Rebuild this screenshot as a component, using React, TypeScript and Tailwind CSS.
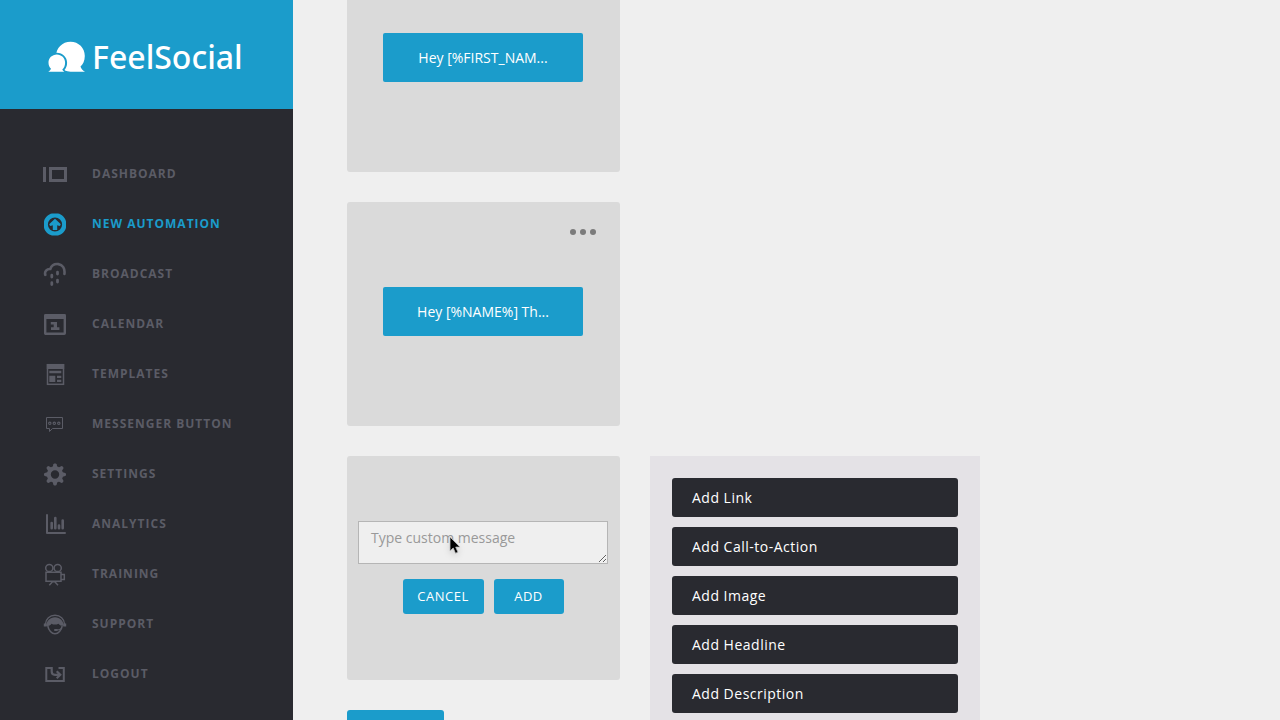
import type { ReactNode } from 'react'
import { clsx } from 'clsx'

type NavItem = { label: string; icon: ReactNode; active?: boolean }

// Sidebar icons, all on a 24px grid
const icons = {
  dashboard: (
    <>
      <rect x="0" y="5" width="3" height="15" fill="currentColor" />
      <rect x="7.500" y="6.500" width="15" height="12" strokeWidth="3" />
    </>
  ),
  automation: (
    <>
      <path
        d="M9 1.600h6c3.500.4 7.400 4.200 8 7.900v6c-.6 3.700-4.500 7.500-8 7.900H9c-3.500-.4-7.400-4.200-8-7.900v-6C1.600 5.800 5.500 2 9 1.600zM12 5.400a7.100 7.100 0 1 0 0 14.200 7.100 7.100 0 0 0 0-14.200z"
        fill="currentColor"
        fillRule="evenodd"
      />
      <path d="M12 6.800l5.600 5.300c.3 1.400-.8 2.100-1.900 1.700l-1.500-.6V18H9.800v-4.800l-1.500.6c-1.100.4-2.200-.3-1.900-1.700z" fill="currentColor" />
    </>
  ),
  broadcast: (
    <>
      <path d="M2.300 12.800C1.300 9.500 3.700 6.800 7.300 7 8.500 3.500 11.800 1.700 15.300 2.100c4.300.5 6.900 4.200 6.100 9.900" strokeWidth="2.600" strokeLinecap="round" />
      <path d="M8.800 13.200v1.800M14.500 10.200V12M8.800 20.700v1.800M14.500 18.200V20" strokeWidth="2.800" strokeLinecap="round" />
    </>
  ),
  calendar: (
    <>
      <rect x="2.200" y="3.200" width="19.600" height="18.600" rx="0.500" strokeWidth="2.400" />
      <path d="M1.500 2.200h21V7h-21z" fill="currentColor" />
      <path d="M7.800 9.900h6.200v5.300h2.400v2.900H8v-2.900h2.700v-2.600H7.800z" fill="currentColor" />
    </>
  ),
  templates: (
    <>
      <rect x="4.500" y="2.700" width="16" height="19.600" strokeWidth="1.500" />
      <path d="M3.800 2h17.400v4.900H3.800zM6.300 8.700h12v2.600h-12zM6.300 13.700h6V20h-6zM14 13.700h4.300V16H14zM14 17.700h4.300V20H14z" fill="currentColor" />
    </>
  ),
  messenger: (
    <>
      <path d="M3.500 5.500h16v11h-10l-3 3v-3h-3z" strokeWidth="1" />
      <circle cx="6.800" cy="11.300" r="1.200" strokeWidth="1.100" />
      <circle cx="11.300" cy="11.300" r="1.200" strokeWidth="1.100" />
      <circle cx="15.800" cy="11.300" r="1.200" strokeWidth="1.100" />
    </>
  ),
  settings: (
    <>
      <circle cx="12" cy="12.500" r="6.200" strokeWidth="4" />
      {[0, 45, 90, 135, 180, 225, 270, 315].map(deg => (
        <path key={deg} d="M9.500 5.500l.9-3.200q.3-.8 1-.8h1.200q.7 0 1 .8l.9 3.200z" fill="currentColor" transform={`rotate(${deg} 12 12.500)`} />
      ))}
    </>
  ),
  analytics: (
    <>
      <path d="M4 3v18h18" strokeWidth="2" strokeLinecap="round" strokeLinejoin="round" />
      <path d="M8.700 11v5.300M12.300 6v10.300M16 13.500v2.800M19.700 8.500v7.800" strokeWidth="2.600" strokeLinecap="round" />
    </>
  ),
  training: (
    <>
      <circle cx="6.300" cy="6" r="3.600" strokeWidth="1.500" />
      <circle cx="14.700" cy="6" r="3.600" strokeWidth="1.500" />
      <path d="M3 10.300h15v9H3zM18 12.500h3.300v5H18M6.300 23.300l3.200-3.500h2.300l3.200 3.500" strokeWidth="1.500" />
    </>
  ),
  support: (
    <>
      <path d="M2.300 12.500C2.700 6.800 6.800 3.300 12 3.300s9.300 3.500 9.700 9.200" strokeWidth="1.400" />
      <path d="M.8 11.500h3v3h-3zM20.200 11.500h3v3h-3z" fill="currentColor" />
      <path d="M3.300 14C3.300 9 7 5.300 12 5.300S20.700 9 20.700 14c-2.400 0-4-.7-5.200-2.200-2.800 1.300-5.300.9-7-.1-.8 1.500-2.600 2.300-5.200 2.300z" fill="currentColor" />
      <path d="M4.800 14c.8 4.300 3.800 7.800 7.200 7.800s6.400-3.500 7.200-7.800" strokeWidth="1.500" />
      <path d="M18.500 16.300c-1.200 1.300-3 1.700-5.500 1.700" strokeWidth="1.100" />
      <rect x="11" y="17" width="3.800" height="2" rx="1" fill="currentColor" />
    </>
  ),
  logout: (
    <>
      <path d="M8.700 6H3.300v13h17.500V6h-5.300" strokeWidth="2" />
      <path d="M8.700 5v4.500c0 2.200 1 3.300 3.200 3.300h4.600M13.700 9.300l3.600 3.500-3.600 3.500" strokeWidth="2.200" />
    </>
  ),
}

const navItems: NavItem[] = [
  { label: 'Dashboard', icon: icons.dashboard },
  { label: 'New Automation', icon: icons.automation, active: true },
  { label: 'Broadcast', icon: icons.broadcast },
  { label: 'Calendar', icon: icons.calendar },
  { label: 'Templates', icon: icons.templates },
  { label: 'Messenger Button', icon: icons.messenger },
  { label: 'Settings', icon: icons.settings },
  { label: 'Analytics', icon: icons.analytics },
  { label: 'Training', icon: icons.training },
  { label: 'Support', icon: icons.support },
  { label: 'Logout', icon: icons.logout },
]

const blockTypes = ['Add Link', 'Add Call-to-Action', 'Add Image', 'Add Headline', 'Add Description']

function Logo() {
  return (
    <a href="#" className="flex h-[109px] shrink-0 items-center gap-1.5 bg-[#1b9ccb] pl-12 pt-[5px] text-white">
      <svg viewBox="0 0 38 32" className="h-8 w-[38px] shrink-0" aria-hidden="true">
        <path d="M22.500.7c8.200 0 14.300 6.200 14.300 14.200 0 5.200-2 8.500-4.300 10.700.6 2.300 2.200 4 4.500 5.100H22.500C14.300 30.700 8 23.200 8 15 8 7 14.300.7 22.500.7z" fill="white" />
        <path d="M8.800 11.700c5.900 0 10.300 4.500 10.300 10 0 3-1 5.400-2.600 7.300.7 1 1.400 1.500 2.500 1.700V34H-2V11.700z" fill="#1b9ccb" />
        <path d="M8.800 13.600c4.700 0 8.300 3.600 8.300 8.100 0 3-1.100 5.300-2.800 6.800.3 1 1 1.700 2.100 2.200H.3c1.500-.7 2.400-1.700 2.600-3.100C1.400 26.200.5 24.200.5 21.700c0-4.500 3.600-8.100 8.300-8.100z" fill="white" />
      </svg>
      <span className="font-['Noto_Sans',sans-serif] text-[32px] font-medium">FeelSocial</span>
    </a>
  )
}

function Sidebar() {
  return (
    <aside className="flex w-[293px] shrink-0 flex-col bg-[#292a30]">
      <Logo />
      <nav className="pt-10">
        <ul>
          {navItems.map(item => (
            <li key={item.label}>
              <a
                href="#"
                aria-current={item.active ? 'page' : undefined}
                className={clsx(
                  'flex h-[50px] items-center gap-[25px] pl-[43px] text-xs font-bold uppercase tracking-[1px]',
                  item.active ? 'text-[#1b9ccb]' : 'text-[#5b5c66]'
                )}
              >
                <svg viewBox="0 0 24 24" className="size-6 shrink-0" fill="none" stroke="currentColor" strokeWidth="0" aria-hidden="true">
                  {item.icon}
                </svg>
                {item.label}
              </a>
            </li>
          ))}
        </ul>
      </nav>
    </aside>
  )
}

function MessageButton({ children }: { children: ReactNode }) {
  return (
    <button type="button" className="h-[49px] w-[200px] rounded-xs bg-[#1b9ccb] text-sm text-white">
      {children}
    </button>
  )
}

function MessageForm() {
  return (
    <form className="flex h-56 flex-col items-center rounded-[3px] bg-[#dadada] pl-[11px] pr-3 pt-[65px]">
      <textarea
        aria-label="Custom message"
        placeholder="Type custom message"
        rows={1}
        className="block h-[43px] w-full resize border border-[#b5b5b5] bg-[#efefef] px-3 py-1.5 text-sm text-gray-700 placeholder:text-[#999999]"
      />
      <div className="mt-[15px] flex gap-2.5">
        <button type="button" className="h-[35px] w-[81px] rounded-[3px] bg-[#1b9ccb] text-[13px] tracking-[0.5px] text-white">
          CANCEL
        </button>
        <button type="button" className="h-[35px] w-[70px] rounded-[3px] bg-[#1b9ccb] text-[13px] tracking-[0.5px] text-white">
          ADD
        </button>
      </div>
    </form>
  )
}

export default function App() {
  return (
    <div className="flex h-screen overflow-hidden bg-[#efefef] font-['Open_Sans',sans-serif]">
      <Sidebar />

      <main className="min-w-0 flex-1 overflow-hidden pl-[54px]">
        <div className="flex w-[273px] flex-col gap-[30px]">
          {/* First message, partly scrolled away */}
          <section className="flex h-[172px] rounded-b-[3px] bg-[#dadada] pl-9 pt-[33px]">
            <MessageButton>Hey [%FIRST_NAM...</MessageButton>
          </section>

          <section className="relative h-56 rounded-[3px] bg-[#dadada] pl-9 pt-[85px]">
            <button type="button" aria-label="Message options" className="absolute right-6 top-[27px] flex gap-1 text-[#7b7b7b]">
              <span className="size-1.5 rounded-full bg-current" />
              <span className="size-1.5 rounded-full bg-current" />
              <span className="size-1.5 rounded-full bg-current" />
            </button>
            <MessageButton>Hey [%NAME%] Th...</MessageButton>
          </section>
        </div>

        <div className="mt-[30px] flex items-start gap-[30px]">
          <div className="relative w-[273px] shrink-0">
            <MessageForm />
            <button type="button" aria-label="Add message" className="mt-[30px] h-[35px] w-[97px] rounded-[3px] bg-[#1b9ccb]" />

            {/* Mouse pointer */}
            <svg viewBox="0 0 14 20" className="pointer-events-none absolute left-[102px] top-20 h-5 w-3.5 drop-shadow-md" aria-hidden="true">
              <path d="M1 1v14l3.200-3 2.300 5.300 2.500-1.100-2.300-5.100H11z" fill="black" stroke="#c0c0c0" strokeWidth="0.800" />
            </svg>
          </div>

          <section className="flex w-[330px] shrink-0 flex-col gap-2.5 bg-[#e4e2e6] p-[22px]">
            {blockTypes.map(label => (
              <button
                key={label}
                type="button"
                className="h-[39px] rounded-[3px] bg-[#292a30] px-5 text-left text-sm tracking-[0.5px] text-white"
              >
                {label}
              </button>
            ))}
          </section>
        </div>
      </main>
    </div>
  )
}
